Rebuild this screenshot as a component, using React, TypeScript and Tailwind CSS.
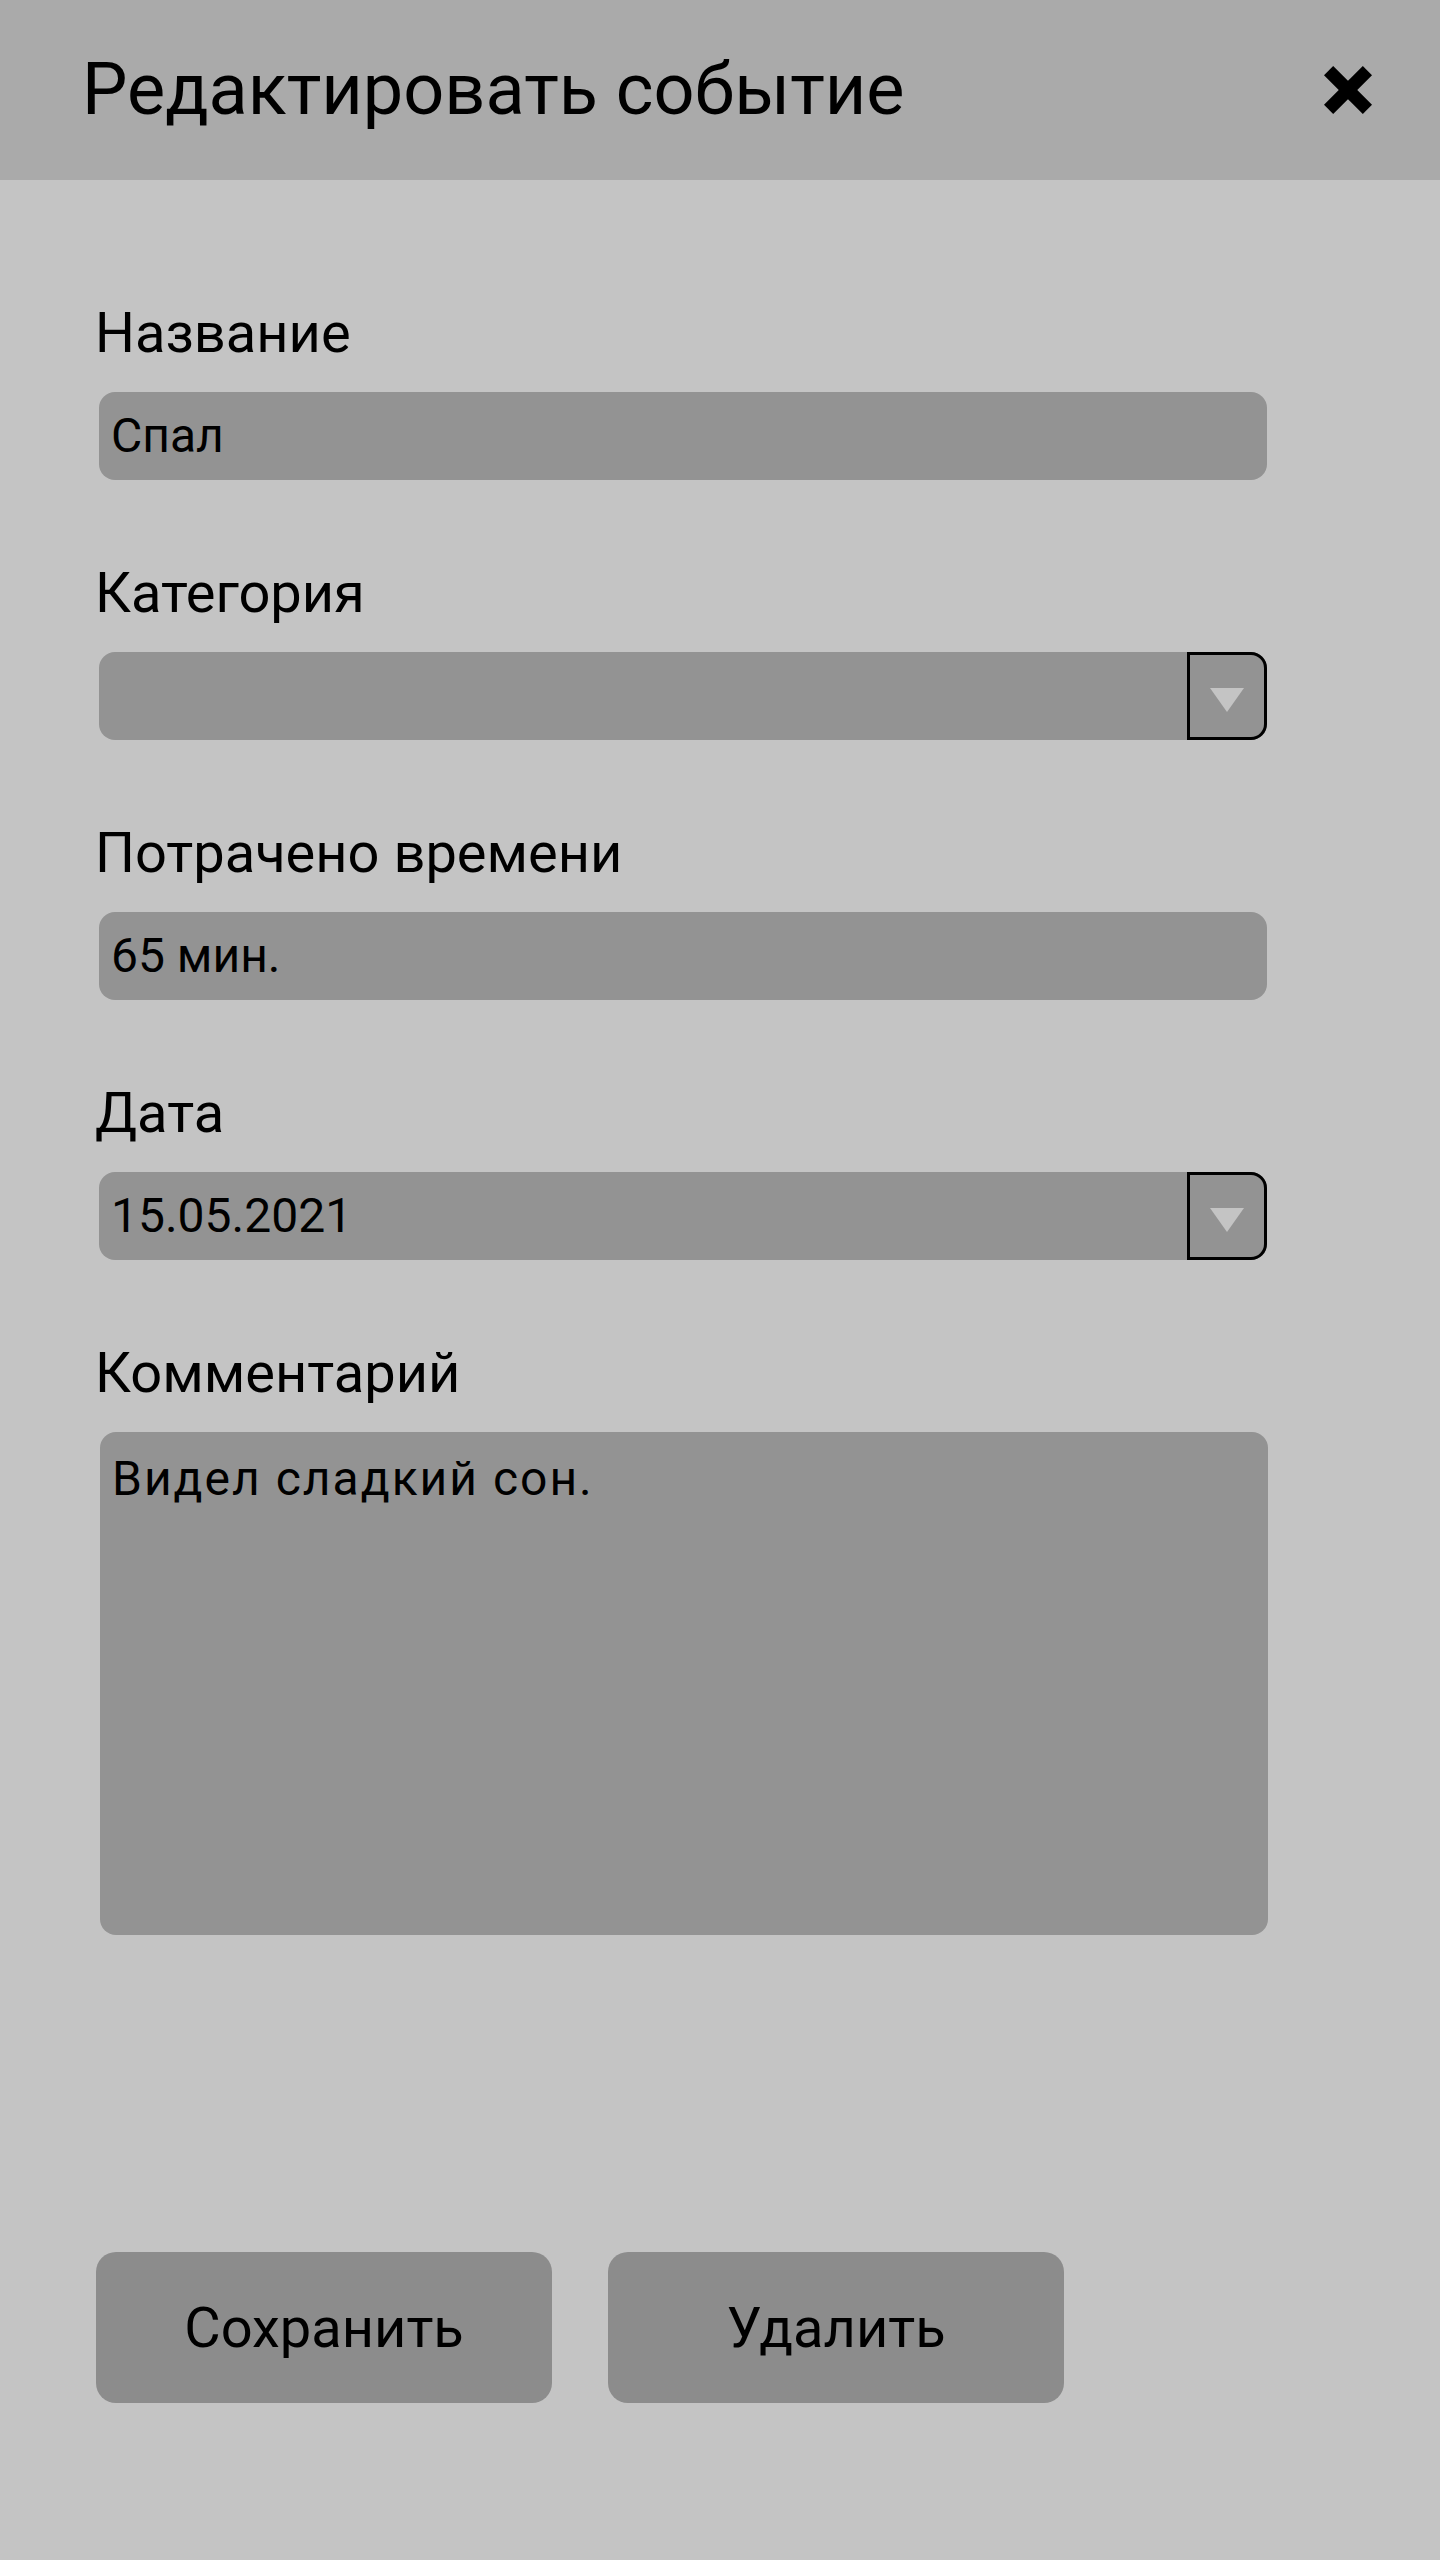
const font = { fontFamily: "Roboto, 'Noto Sans', sans-serif" };

interface IField {
  label: string
  value?: string
  dropdown?: boolean
}

const fields: IField[] = [
  { label: "Название", value: "Спал" },
  { label: "Категория", value: "", dropdown: true },
  { label: "Потрачено времени", value: "65 мин." },
  { label: "Дата", value: "15.05.2021", dropdown: true },
];

const Arrow = () => (
  <div className="flex h-full w-[80px] items-center justify-center rounded-r-[16px] border-[3px] border-black pt-[8px]">
    <svg width="34" height="24" viewBox="0 0 34 24">
      <polygon points="0,0 34,0 17,24" fill="#c4c4c4" />
    </svg>
  </div>
);

const Field = ({ label, value, dropdown }: IField) => {
  return (
    <div className="flex flex-col">
      <span className="text-[56px] leading-[66px] text-black">{label}</span>
      <div className="ml-[4px] mt-[26px] flex h-[88px] w-[1168px] items-center rounded-[16px] bg-[#939393]">
        <span className="flex-1 pl-[12px] text-[48px] leading-[56px] text-black">{value}</span>
        {dropdown && <Arrow />}
      </div>
    </div>
  );
};

export default function App() {
  return (
    <div className="min-h-[2560px] bg-[#c4c4c4]" style={font}>
      <div className="flex h-[180px] items-center justify-between bg-[#aaaaaa] pl-[82px] pr-[68px]">
        <h1 className="text-[72px] font-normal text-black">Редактировать событие</h1>
        <svg width="48" height="48" viewBox="0 0 48 48">
          <line x1="4.6" y1="4.6" x2="43.4" y2="43.4" stroke="black" strokeWidth="13" />
          <line x1="43.4" y1="4.6" x2="4.6" y2="43.4" stroke="black" strokeWidth="13" />
        </svg>
      </div>

      <div className="flex flex-col gap-[80px] pl-[95px] pt-[120px]">
        {fields.map((f) => (
          <Field key={f.label} {...f} />
        ))}
        <div className="flex flex-col">
          <span className="text-[56px] leading-[66px] text-black">Комментарий</span>
          <div className="ml-[5px] mt-[26px] h-[503px] w-[1168px] rounded-[16px] bg-[#939393] pl-[12px] pt-[19px]">
            <p className="text-[48px] leading-[56px] tracking-[2px] text-black">Видел сладкий сон.</p>
          </div>
        </div>
      </div>

      <div className="mt-[317px] flex gap-[56px] pl-[96px]">
        <button className="h-[151px] w-[456px] rounded-[20px] bg-[#8c8c8c] text-[56px] text-black">Сохранить</button>
        <button className="h-[151px] w-[456px] rounded-[20px] bg-[#8c8c8c] text-[56px] text-black">Удалить</button>
      </div>
    </div>
  );
}
